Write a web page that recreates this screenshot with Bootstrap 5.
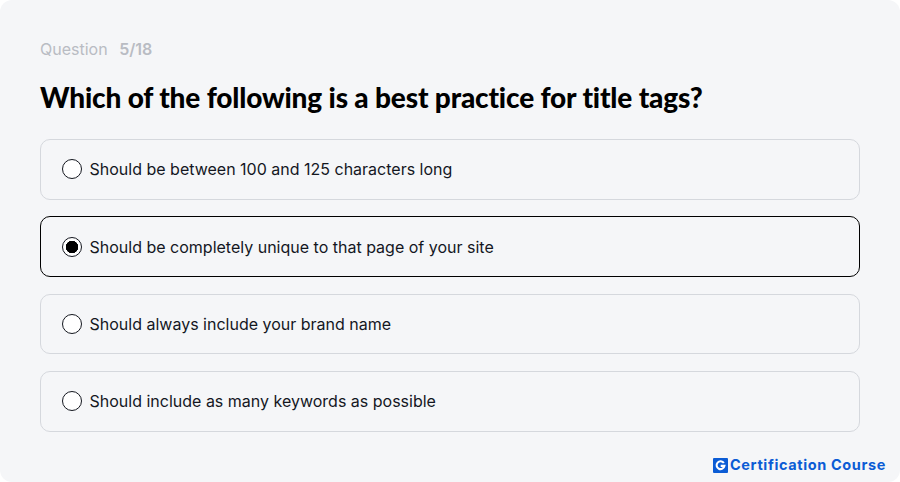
<!DOCTYPE html>
<html lang="en"><head><meta charset="utf-8">
<link href="https://cdn.jsdelivr.net/npm/bootstrap@5.3.0/dist/css/bootstrap.min.css" rel="stylesheet">
<style>
html,body{height:482px;overflow:hidden;background:#fff}
body{font-family:Inter,"Liberation Sans",sans-serif;color:#14171f}
.quiz-panel{width:900px;height:482px;background:#f5f6f8;border-radius:12px;padding:39px 40px 0;position:relative}
.q-meta{font-size:16px;line-height:20px;color:#b9bcc3;gap:12px}
.q-meta b{font-weight:600;margin-left:-.5px}
.q-title{font-family:Lato,sans-serif;font-weight:900;font-size:28px;line-height:36px;margin:20px 0 24px;color:#000;letter-spacing:-.16px}
.opt-list{gap:16.67px}
.opt-row{height:60.67px;border:1px solid #d5d8dd;border-radius:10px;padding:0 21px;gap:7.5px;font-size:16px;color:#14171f}
.opt-row.sel{border-color:#000}
.opt-dot{width:20px;height:20px;border:1.5px solid #14171f;border-radius:50%;background:#fff;flex:none}
.opt-row.sel .opt-dot{background:radial-gradient(circle,#000 0 6px,#fff 6.5px)}
.brand-mark{position:absolute;right:14px;bottom:8px;gap:2px;font-weight:700;font-size:14.5px;color:#0b5cd5;letter-spacing:.62px;line-height:18px}
.brand-mark svg{width:15px;height:15px}
</style></head><body>
<main class="quiz-panel">
<div class="q-meta d-flex"><span>Question</span><b>5/18</b></div>
<h1 class="q-title">Which of the following is a best practice for title tags?</h1>
<div class="opt-list d-flex flex-column">
<div class="opt-row d-flex align-items-center"><span class="opt-dot"></span><span>Should be between 100 and 125 characters long</span></div>
<div class="opt-row sel d-flex align-items-center"><span class="opt-dot"></span><span>Should be completely unique to that page of your site</span></div>
<div class="opt-row d-flex align-items-center"><span class="opt-dot"></span><span>Should always include your brand name</span></div>
<div class="opt-row d-flex align-items-center"><span class="opt-dot"></span><span>Should include as many keywords as possible</span></div>
</div>
<div class="brand-mark d-flex align-items-center"><svg viewBox="0 0 16 16"><rect width="16" height="16" rx="1" fill="#0b5cd5"/><path d="M11.6 5.4A4.2 4.2 0 1 0 12.2 8.4H8.2" fill="none" stroke="#fff" stroke-width="2.2"/></svg><span>Certification Course</span></div>
</main>
<script src="https://cdn.jsdelivr.net/npm/bootstrap@5.3.0/dist/js/bootstrap.bundle.min.js"></script>
</body></html>
